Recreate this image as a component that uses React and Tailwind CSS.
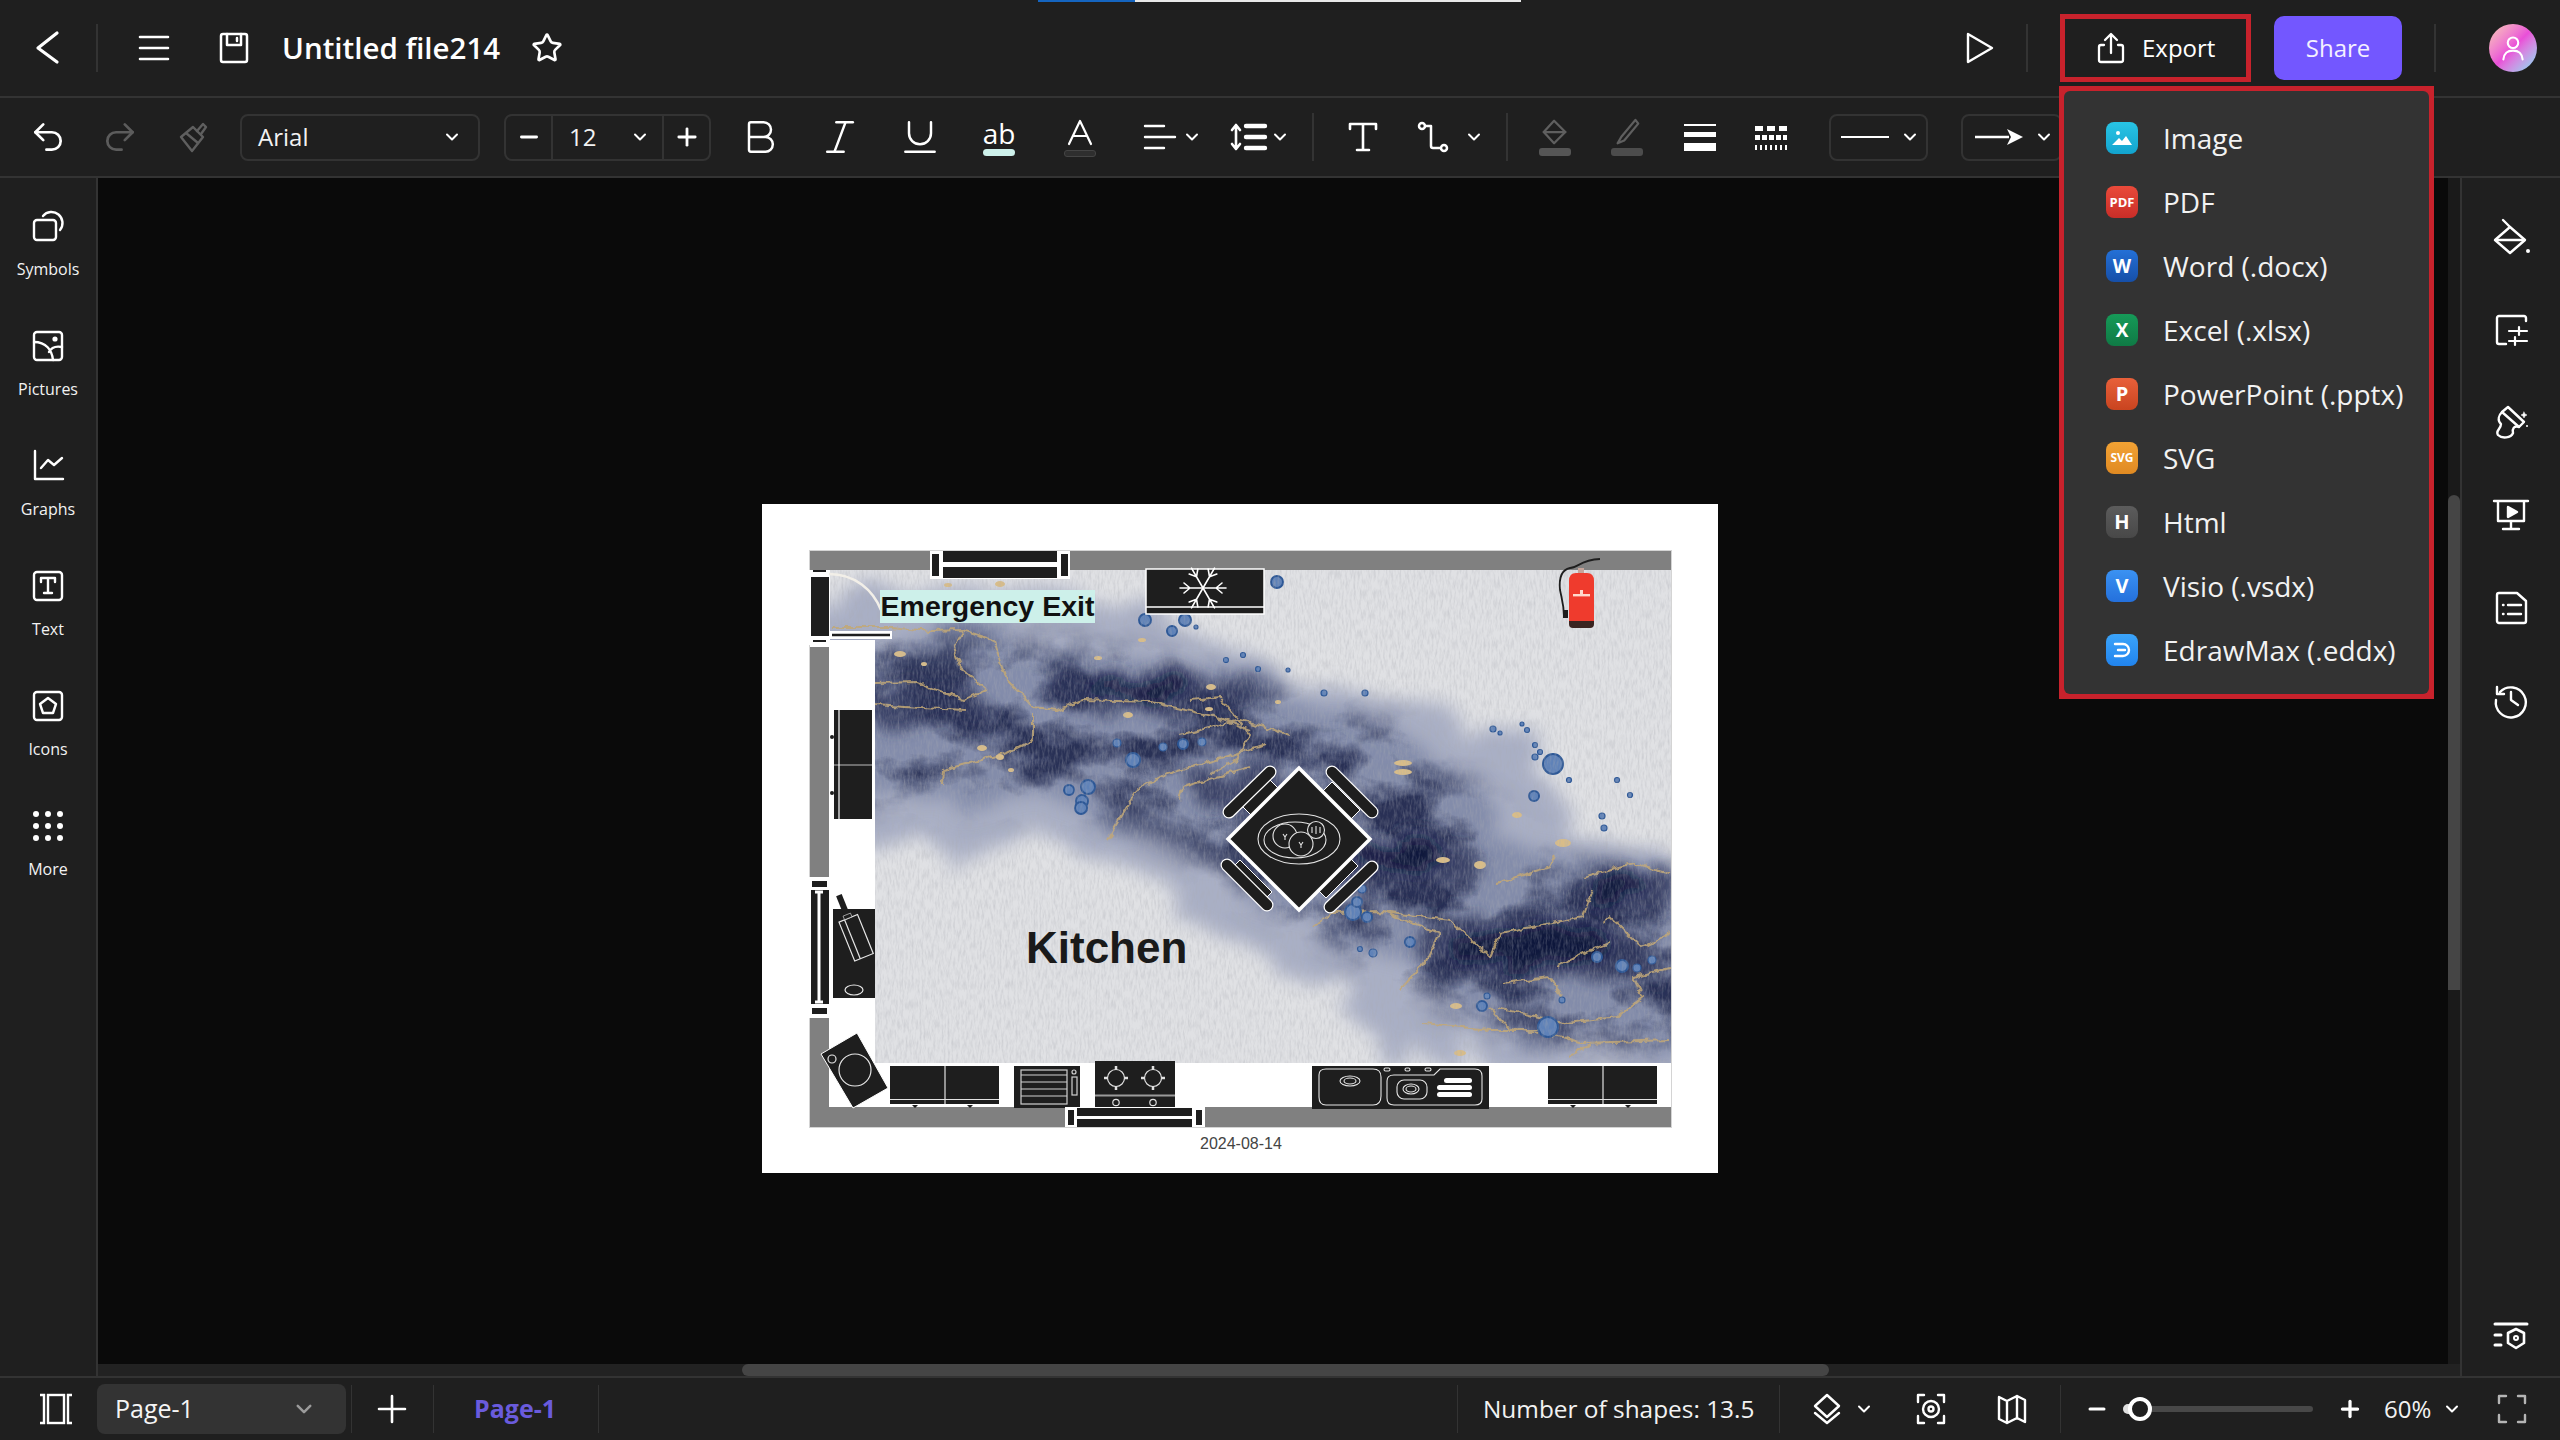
import React from "react";
import { Star, Bold, Italic, Underline, Undo2, Redo2, Plus, Minus } from "lucide-react";

const S = ({ size = 32, w = 2.4, children, color = "#fff", className = "" }) => (
  <svg width={size} height={size} viewBox="0 0 32 32" fill="none" stroke={color} strokeWidth={w} strokeLinecap="round" strokeLinejoin="round" className={"shrink-0 overflow-visible " + className}>
    {children}
  </svg>
);
const Chev = ({ className = "", color = "#fff", size = 16 }) => (
  <svg width={size} height={size} viewBox="0 0 16 16" fill="none" stroke={color} strokeWidth="2" strokeLinecap="round" strokeLinejoin="round" className={"shrink-0 " + className}>
    <path d="M3 5.5 8 10.5 13 5.5" />
  </svg>
);
const VDiv = ({ className = "" }) => <div className={"w-[2px] h-[48px] bg-[#333333] shrink-0 " + className} />;

const LeftItem = ({ label, children }) => (
  <div className="h-[120px] pt-[32px] flex flex-col items-center">
    {children}
    <span className="mt-[16px] text-[16px] leading-[22px] text-[#f2f2f2]">{label}</span>
  </div>
);

const MENU = [
  { l: "Image", c: "from-[#28c4e4] to-[#12a4cf]", g: "img" },
  { l: "PDF", c: "from-[#ea4a3a] to-[#c92d28]", g: "PDF", t: "text-[13px]" },
  { l: "Word (.docx)", c: "from-[#2470d6] to-[#164fa8]", g: "W", t: "text-[19px]" },
  { l: "Excel (.xlsx)", c: "from-[#169a58] to-[#0f7a45]", g: "X", t: "text-[19px]" },
  { l: "PowerPoint (.pptx)", c: "from-[#e8603a] to-[#c9441f]", g: "P", t: "text-[20px]" },
  { l: "SVG", c: "from-[#f2a234] to-[#e08a22]", g: "SVG", t: "text-[12px] text-[#ffe9c4]" },
  { l: "Html", c: "from-[#5c5c5c] to-[#484848]", g: "H", t: "text-[20px]" },
  { l: "Visio (.vsdx)", c: "from-[#3b92f2] to-[#2470dc]", g: "V", t: "text-[20px]" },
  { l: "EdrawMax (.eddx)", c: "from-[#3ba4fa] to-[#2184ee]", g: "edraw" },
];

function MenuGlyph({ g, t }) {
  if (g === "img")
    return (
      <svg width="24" height="20" viewBox="0 0 24 20" fill="#fff">
        <circle cx="8" cy="5" r="2" />
        <path d="M2 17 9 10 12 13 16 8 22 17Z" />
      </svg>
    );
  if (g === "edraw")
    return (
      <svg width="22" height="18" viewBox="0 0 22 18" fill="none" stroke="#fff" strokeWidth="2.4" strokeLinecap="round">
        <path d="M4 3H12A6 6 0 0 1 12 15H4M7 9H14" />
      </svg>
    );
  return <span className={"font-bold leading-none text-white " + t}>{g}</span>;
}

const VEINS = [
  "M830 627 L890 627 L930 631 L963 630 L953 647 L960 667 L987 690",
  "M963 630 L993 640 L1000 662 L1007 680 L1033 707 L1057 710 L1083 700 L1150 702 L1217 717 L1250 730",
  "M1033 713 L1033 740 L1007 753 L943 770 L942 783",
  "M875 683 L917 682 L963 700 L987 690",
  "M875 705 L920 708 L967 710",
  "M1250 767 L1183 787 L1180 800",
  "M1107 840 L1137 790 L1167 773 L1250 750 L1265 745",
  "M1190 700 L1220 697 L1250 735 L1236 760 L1210 775",
  "M1313 927 L1333 913 L1383 912 L1440 933 L1427 960 L1400 990",
  "M1383 912 L1450 920 L1490 957 L1500 933 L1583 917 L1593 890",
  "M1583 877 L1633 863 L1670 873",
  "M1603 923 L1610 917 L1643 947 L1670 933",
  "M1423 1023 L1490 1030 L1537 1030 L1583 1043 L1670 1040",
  "M1490 1008 L1507 1027 L1537 1033",
  "M1497 1008 L1567 1023 L1617 1017 L1643 997 L1633 977 L1670 968",
  "M1503 983 L1550 977 L1563 1000",
  "M1557 967 L1583 953 L1610 943",
  "M1497 883 L1550 867 L1555 857",
  "M1570 1055 L1590 1045",
  "M1180 735 L1240 720 L1290 735",
];
const DOTS = [
  [1145, 620, 6], [1185, 620, 6], [1172, 631, 5], [1196, 627, 2], [1133, 760, 7], [1088, 787, 7], [1069, 790, 5], [1082, 801, 6], [1081, 808, 6],
  [1117, 743, 4], [1183, 744, 5], [1163, 747, 4], [1202, 742, 4], [1277, 582, 6], [1324, 693, 3], [1365, 693, 3], [1553, 764, 10], [1534, 796, 5],
  [1602, 816, 3], [1604, 828, 3], [1569, 780, 2.5], [1527, 730, 2.5], [1493, 729, 3], [1500, 733, 2], [1535, 757, 3], [1353, 912, 8], [1367, 917, 5], [1357, 902, 5],
  [1362, 889, 4], [1548, 1027, 10], [1410, 942, 5], [1622, 966, 6], [1637, 968, 4], [1652, 960, 4], [1482, 1006, 5], [1562, 1000, 3], [1597, 957, 5],
  [1487, 996, 3], [1373, 953, 4], [1360, 949, 2.5], [1617, 780, 2.5], [1522, 724, 2], [1535, 745, 2.5], [1540, 752, 2.5], [1243, 655, 2.5], [1226, 660, 2.5], [1258, 669, 2.5], [1288, 670, 2], [1630, 795, 2.5],
];
const GOLD = [
  [1403, 763, 9, 3], [1403, 772, 9, 3], [1443, 860, 7, 3], [1480, 865, 6, 4], [1563, 843, 8, 4], [1517, 815, 5, 3], [900, 654, 6, 3], [924, 664, 3, 2], [948, 585, 4, 2],
  [1142, 640, 4, 2], [1098, 658, 4, 2], [1211, 687, 5, 3], [1128, 715, 5, 3], [982, 748, 5, 3], [1000, 757, 4, 3], [1011, 770, 3, 2], [1209, 709, 4, 2], [1456, 1006, 6, 3], [1460, 1053, 6, 3], [1278, 702, 3, 2], [1000, 584, 5, 3],
];
const BAND = "M800 640 C900 645 1000 635 1120 655 C1200 675 1300 700 1400 730 C1450 780 1500 810 1530 860 C1590 880 1640 870 1700 870 L1700 1050 C1560 1050 1480 1030 1420 985 C1340 950 1260 895 1180 845 C1100 790 950 800 800 795 Z";

function Plan() {
  return (
    <svg className="absolute inset-0" width="956" height="669" viewBox="762 504 956 669">
      <defs>
        <filter id="wc" x="-15%" y="-15%" width="130%" height="130%">
          <feTurbulence type="fractalNoise" baseFrequency="0.014 0.02" numOctaves="5" seed="7" result="n" />
          <feDisplacementMap in="SourceGraphic" in2="n" scale="80" xChannelSelector="R" yChannelSelector="G" />
          <feGaussianBlur stdDeviation="9" />
        </filter>
        <filter id="wc2" x="-30%" y="-30%" width="160%" height="160%">
          <feTurbulence type="fractalNoise" baseFrequency="0.025" numOctaves="4" seed="3" result="n" />
          <feDisplacementMap in="SourceGraphic" in2="n" scale="45" xChannelSelector="G" yChannelSelector="R" />
          <feGaussianBlur stdDeviation="7" />
        </filter>
        <filter id="cloud" x="-10%" y="-10%" width="120%" height="120%" colorInterpolationFilters="sRGB">
          <feGaussianBlur in="SourceGraphic" stdDeviation="18" result="b" />
          <feTurbulence type="fractalNoise" baseFrequency="0.011 0.017" numOctaves="6" seed="21" result="n" />
          <feColorMatrix in="n" type="matrix" values="0 0 0 0 0.1  0 0 0 0 0.13  0 0 0 0 0.28  4 0 0 0 -1.7" result="c" />
          <feComposite in="c" in2="b" operator="in" />
        </filter>
        <filter id="vein" x="-5%" y="-5%" width="110%" height="110%">
          <feTurbulence type="fractalNoise" baseFrequency="0.12" numOctaves="2" seed="5" result="n" />
          <feDisplacementMap in="SourceGraphic" in2="n" scale="7" xChannelSelector="R" yChannelSelector="G" />
        </filter>
        <filter id="paper" x="0" y="0" width="100%" height="100%">
          <feTurbulence type="fractalNoise" baseFrequency="0.5 0.1" numOctaves="3" seed="11" />
          <feColorMatrix type="matrix" values="0 0 0 0 0.4  0 0 0 0 0.41  0 0 0 0 0.45  0.7 0 0 0 -0.27" />
        </filter>
        <clipPath id="mc">
          <path d="M829 570H1671V1063H875V640H829Z" />
        </clipPath>
      </defs>

      <g clipPath="url(#mc)">
        <rect x="825" y="565" width="850" height="505" fill="#e0e1e4" />
        <path filter="url(#wc)" fill="#a9afc5" d="M800 580 C930 585 1000 590 1130 595 C1210 625 1230 650 1290 680 C1380 680 1480 720 1530 750 C1560 830 1620 850 1700 860 L1700 1080 L1500 1080 C1440 1050 1380 1040 1320 995 C1250 950 1200 905 1130 865 C1050 830 950 850 800 840 Z" />
        <path filter="url(#wc)" fill="#7d86a6" opacity="0.85" d={BAND} />
        <path filter="url(#cloud)" fill="#000" d={BAND} opacity="0.85" />
        <g filter="url(#wc2)" fill="#2a3358" opacity="0.8">
          <ellipse cx="1150" cy="692" rx="100" ry="22" />
          <ellipse cx="930" cy="706" rx="70" ry="22" />
          <ellipse cx="1240" cy="790" rx="50" ry="22" />
          <ellipse cx="1400" cy="862" rx="90" ry="26" />
          <ellipse cx="1520" cy="948" rx="110" ry="32" />
          <ellipse cx="1630" cy="892" rx="55" ry="22" />
          <ellipse cx="1620" cy="960" rx="40" ry="24" />
        </g>
        <g filter="url(#wc2)" fill="#10153a">
          <ellipse cx="1530" cy="946" rx="72" ry="18" />
          <ellipse cx="1400" cy="858" rx="52" ry="12" />
          <ellipse cx="1140" cy="690" rx="50" ry="10" />
          <ellipse cx="1620" cy="888" rx="30" ry="10" />
        </g>
        <g filter="url(#vein)" fill="none" stroke="#c4a873" strokeWidth="2" strokeLinejoin="round" opacity="0.85">
          {VEINS.map((d, i) => (
            <path key={i} d={d} />
          ))}
        </g>
        {GOLD.map(([x, y, rx, ry], i) => (
          <ellipse key={i} cx={x} cy={y} rx={rx} ry={ry} fill="#d9bd88" />
        ))}
        {DOTS.map(([x, y, r], i) => (
          <circle key={i} cx={x} cy={y} r={r} fill="#5f82b8" stroke="#2c5796" strokeWidth={r > 4 ? 2 : 1.2} />
        ))}
        <rect x="825" y="565" width="850" height="505" filter="url(#paper)" />
      </g>

      {/* walls */}
      <g fill="#808080">
        <rect x="810" y="551" width="861" height="19" />
        <rect x="810" y="647" width="19" height="230" />
        <rect x="810" y="1018" width="19" height="109" />
        <rect x="810" y="1107" width="255" height="20" />
        <rect x="1205" y="1107" width="466" height="20" />
      </g>
      <rect x="809.5" y="550.5" width="862" height="577" fill="none" stroke="#d4d4d4" strokeWidth="1" />
      <path d="M875 1063H1657Q1667 1063 1671 1071V1107H829V660Q829 640 845 640H860Q875 640 875 655Z" fill="#fff" />

      {/* top door-window */}
      <rect x="930" y="551" width="140" height="28" fill="#fff" />
      <g fill="#1e1e1e">
        <rect x="943" y="551" width="114" height="11" />
        <rect x="943" y="567" width="114" height="11" />
        <rect x="932" y="554" width="7" height="22" />
        <rect x="1061" y="554" width="7" height="22" />
      </g>
      <path d="M942 564.500H1058" stroke="#fff" strokeWidth="2.500" />
      {/* AC */}
      <rect x="1146" y="569" width="118" height="45" fill="#1e1e1e" stroke="#fff" strokeWidth="1.5" />
      <path d="M1146 607H1264" stroke="#fff" strokeWidth="1.5" />
      <g stroke="#fff" strokeWidth="1.6" strokeLinecap="round" fill="none">
        {[0, 60, 120, 180, 240, 300].map((a) => (
          <g key={a} transform={`rotate(${a} 1203 588)`}>
            <path d="M1203 588H1226M1216 588l6 -5M1216 588l6 5" />
          </g>
        ))}
      </g>
      {/* left top door */}
      <rect x="809" y="570" width="21" height="75" fill="#fff" />
      <rect x="811" y="577" width="18" height="59" fill="#1e1e1e" />
      <path d="M813 571H826M813 641H826" stroke="#1e1e1e" strokeWidth="2" />
      <path d="M829 574C855 574 873 590 881 610" stroke="#f2efe8" strokeWidth="2.5" fill="none" />
      <path d="M829 631H892V639H829Z" fill="#fff" />
      <path d="M832 635H890" stroke="#1e1e1e" strokeWidth="2.5" />
      {/* left cabinet */}
      <rect x="834" y="710" width="38" height="109" fill="#1e1e1e" />
      <path d="M834 765H872" stroke="#bbb" strokeWidth="1" />
      <path d="M839 710V819" stroke="#fff" strokeWidth="1.2" />
      <circle cx="832" cy="737" r="2" fill="#1e1e1e" />
      <circle cx="832" cy="793" r="2" fill="#1e1e1e" />
      {/* left window */}
      <rect x="809" y="877" width="21" height="141" fill="#fff" />
      <g fill="#1e1e1e">
        <rect x="811" y="890" width="18" height="114" />
        <rect x="812" y="881" width="15" height="6" />
        <rect x="812" y="1008" width="15" height="6" />
      </g>
      <path d="M819 893V1001" stroke="#fff" strokeWidth="3" />
      <path d="M815 892H823M815 1002H823" stroke="#fff" strokeWidth="3" />
      {/* counter w board */}
      <rect x="833" y="909" width="42" height="89" fill="#1e1e1e" />
      <g transform="rotate(-22 855 935)">
        <rect x="845" y="917" width="20" height="42" fill="none" stroke="#e6e6e6" strokeWidth="1.2" />
        <path d="M851 917V959" stroke="#e6e6e6" strokeWidth="1.2" />
        <rect x="852" y="892" width="6" height="22" fill="#1e1e1e" />
        <rect x="851" y="913" width="8" height="4" fill="#1e1e1e" stroke="#ddd" strokeWidth=".6" />
      </g>
      <ellipse cx="854" cy="990" rx="9" ry="5" fill="none" stroke="#e6e6e6" strokeWidth="1.2" />
      {/* washer */}
      <polygon points="857,1033 888,1088 853,1108 821,1054" fill="#1e1e1e" stroke="#fff" strokeWidth="1" />
      <circle cx="855" cy="1070" r="16" fill="none" stroke="#e6e6e6" strokeWidth="1.2" />
      <circle cx="832" cy="1059" r="4" fill="none" stroke="#e6e6e6" strokeWidth="1.2" />
      {/* bottom cabinets */}
      {[890, 1548].map((x) => (
        <g key={x}>
          <rect x={x} y="1066" width="109" height="38" fill="#1e1e1e" />
          <path d={`M${x + 55} 1066V1104M${x} 1099.5H${x + 109}`} stroke="#e2e2e2" strokeWidth="1.2" />
          <path d={`M${x + 22} 1105h6l-3 3zM${x + 77} 1105h6l-3 3z`} fill="#1e1e1e" />
        </g>
      ))}
      {/* oven */}
      <rect x="1014" y="1066" width="66" height="42" fill="#1e1e1e" />
      <g stroke="#d0d0d0" strokeWidth="1.2" fill="none">
        <rect x="1021" y="1070" width="46" height="34" />
        <path d="M1021 1075H1067M1021 1082H1067M1021 1089H1067M1021 1096H1067" />
        <rect x="1072" y="1077" width="5" height="18" />
        <circle cx="1074" cy="1072" r="2" />
      </g>
      {/* stove */}
      <rect x="1095" y="1061" width="80" height="47" fill="#1e1e1e" />
      <path d="M1095 1095.5H1175" stroke="#9a9a9a" strokeWidth="2" />
      <g stroke="#e0e0e0" strokeWidth="1.2" fill="none">
        {[1116, 1153].map((x) => (
          <g key={x}>
            <circle cx={x} cy="1078" r="8.5" />
            <path d={`M${x - 12} 1078H${x - 8}M${x + 8} 1078H${x + 12}M${x} 1066V1070M${x} 1086V1090`} strokeWidth="2.5" />
            <circle cx={x} cy="1102.5" r="3.2" />
          </g>
        ))}
      </g>
      {/* bottom door */}
      <rect x="1065" y="1107" width="140" height="20" fill="#fff" />
      <g fill="#1e1e1e">
        <rect x="1077" y="1108" width="115" height="8" />
        <rect x="1077" y="1119" width="115" height="8" />
        <rect x="1068" y="1110" width="6" height="15" />
        <rect x="1196" y="1110" width="6" height="15" />
      </g>
      {/* sink */}
      <rect x="1312" y="1066" width="177" height="43" fill="#1e1e1e" />
      <g stroke="#e6e6e6" strokeWidth="1.1" fill="none">
        <path d="M1319 1075Q1319 1069 1326 1069H1373Q1381 1069 1381 1077V1096Q1381 1105 1373 1105H1326Q1319 1105 1319 1097Z" />
        <path d="M1387 1081Q1387 1075 1394 1075H1434L1440 1069H1475Q1482 1069 1482 1076V1099Q1482 1105 1475 1105H1394Q1387 1105 1387 1098Z" />
        <rect x="1397" y="1080" width="30" height="19" rx="7" />
        <ellipse cx="1350" cy="1081" rx="10" ry="5" />
        <ellipse cx="1350" cy="1081" rx="6" ry="3" />
        <ellipse cx="1411" cy="1089" rx="8" ry="5" />
        <ellipse cx="1411" cy="1089" rx="5" ry="3" />
        <rect x="1384" y="1068" width="6" height="3" rx="1.5" />
        <rect x="1405" y="1068" width="5" height="3" rx="1.5" />
        <rect x="1425" y="1068" width="6" height="3" rx="1.5" />
      </g>
      <g fill="#fff">
        <rect x="1444" y="1078" width="28" height="5" rx="2.5" />
        <rect x="1437" y="1085" width="35" height="5" rx="2.5" />
        <rect x="1437" y="1092" width="35" height="5" rx="2.5" />
      </g>
      {/* table */}
      {[
        ["M1229 812L1270 772", "M1241 805L1268 778L1280 790L1253 817Z"],
        ["M1332 772L1372 812", "M1332 782L1360 810L1348 822L1320 794Z"],
        ["M1227 865L1267 905", "M1240 860L1272 892L1260 904L1228 872Z"],
        ["M1330 907L1372 867", "M1358 866L1326 898L1314 886L1346 854Z"],
      ].map(([bar, seat], i) => (
        <g key={i}>
          <path d={seat} fill="#1e1e1e" stroke="#fff" strokeWidth="1" />
          <path d={bar} stroke="#fff" strokeWidth="13" strokeLinecap="round" />
          <path d={bar} stroke="#1e1e1e" strokeWidth="10.5" strokeLinecap="round" />
        </g>
      ))}
      <polygon points="1299,768 1370,839 1299,910 1228,839" fill="#1e1e1e" stroke="#fff" strokeWidth="3.5" />
      <g stroke="#e4e4e4" strokeWidth="1.1" fill="#1e1e1e">
        <ellipse cx="1299" cy="839" rx="41" ry="25" fill="none" />
        <ellipse cx="1295" cy="840" rx="31" ry="18" fill="none" />
        <circle cx="1316" cy="830" r="8.5" />
        <circle cx="1285" cy="836" r="12" />
        <circle cx="1301" cy="844" r="12" />
        <path d="M1283 834l2 3 2 -3M1285 837v3M1299 842l2 3 2 -3M1301 845v3M1312 827v6M1316 826v8M1320 827v6" fill="none" />
      </g>
      {/* extinguisher */}
      <path d="M1600 559C1580 560 1578 568 1570 568C1560 570 1559 580 1560 590C1562 600 1564 605 1564 617" stroke="#1e1e1e" strokeWidth="1.8" fill="none" />
      <rect x="1563" y="610" width="5" height="8" fill="#1e1e1e" />
      <rect x="1578" y="568" width="6" height="6" fill="#c6a49a" />
      <path d="M1569 581Q1569 573 1576 573H1587Q1594 573 1594 581V622H1569Z" fill="#ef3b2d" />
      <path d="M1569 621H1594V624Q1594 628 1590 628H1573Q1569 628 1569 624Z" fill="#3a2420" />
      <rect x="1573" y="594" width="17" height="2.4" fill="#ffd9cc" />
      <rect x="1580" y="590" width="3" height="4" fill="#ffd9cc" />
    </svg>
  );
}

export default function App() {
  return (
    <div className="relative w-[2560px] h-[1440px] overflow-hidden bg-[#1f1f1f] text-white flex flex-col font-['Open_Sans','Noto_Sans',sans-serif]">
      {/* load bar */}
      <div className="absolute top-0 left-[1038px] flex h-[2px]">
        <div className="w-[97px] bg-[#1565c0]" />
        <div className="w-[386px] bg-[#e8e8e8]" />
      </div>

      {/* title bar */}
      <div className="h-[98px] shrink-0 border-b-2 border-[#333333] flex items-center pl-[32px] pr-[23px]">
        <S w={3.2}><path d="M25 1 6 16 25 30" /></S>
        <VDiv className="ml-[32px]" />
        <S className="ml-[40px]" w={2.6}><path d="M2 5H30M2 16H30M2 27H30" /></S>
        <S className="ml-[48px]" w={2.5}><path d="M5 2H27A2 2 0 0 1 29 4V28A2 2 0 0 1 27 30H5A2 2 0 0 1 3 28V4A2 2 0 0 1 5 2Z" /><path d="M9 2V13H23V2" /><path d="M19 6V9" /></S>
        <span className="ml-[32px] w-[217px] text-[29.5px] leading-[40px] font-semibold whitespace-nowrap">Untitled file214</span>
        <Star className="ml-[32px] shrink-0" size={32} strokeWidth={2} color="#fff" />
        <div className="flex-1" />
        <S w={2.4}><path d="M5 2 29 16 5 30Z" /></S>
        <VDiv className="ml-[31px]" />
        <div className="ml-[32px] w-[191px] h-[68px] border-[5px] border-[#c8222c] flex items-center pl-[30px] shrink-0">
          <S w={2.3}><path d="M9 13H6A2 2 0 0 0 4 15V28A2 2 0 0 0 6 30H26A2 2 0 0 0 28 28V15A2 2 0 0 0 26 13H23" /><path d="M16 21V3M10 8 16 2 22 8" /></S>
          <span className="ml-[15px] text-[24px] leading-[32px]">Export</span>
        </div>
        <div className="ml-[23px] w-[128px] h-[64px] rounded-[10px] bg-[#7357ff] flex items-center justify-center text-[24px] text-[#f4f0ff] shrink-0">Share</div>
        <VDiv className="ml-[32px]" />
        <div className="ml-[53px] w-[48px] h-[48px] rounded-full bg-linear-to-br from-[#f8c9b0] via-[#e94fd8] to-[#58e2f6] flex items-center justify-center shrink-0">
          <S size={28} w={2.4}><circle cx="16" cy="10" r="6" /><path d="M5 29C6 21 10 19 16 19C22 19 26 21 27 29" /></S>
        </div>
      </div>

      {/* toolbar */}
      <div className="h-[80px] shrink-0 border-b-2 border-[#333333] flex items-center pl-[29px]">
        <Undo2 size={38} strokeWidth={1.7} color="#fff" className="shrink-0" />
        <Redo2 size={38} strokeWidth={1.7} color="#5c5c5c" className="ml-[34px] shrink-0" />
        <S className="ml-[38px]" color="#5f5f5f" w={2.4}><path d="M4 16 16 6 26 16 15 30Z" /><path d="M9 12 21 22M20 10 26 3 29 6 24 13" /></S>
        <div className="ml-[31px] w-[240px] h-[47px] rounded-[8px] border-2 border-[#333333] flex items-center pl-[16px] pr-[18px] justify-between shrink-0">
          <span className="text-[24px] text-[#f2f2f2]">Arial</span>
          <Chev />
        </div>
        <div className="ml-[24px] w-[207px] h-[47px] rounded-[8px] border-2 border-[#333333] flex items-center shrink-0">
          <div className="w-[45px] h-full flex items-center justify-center"><Minus size={26} strokeWidth={2.6} color="#fff" /></div>
          <div className="w-[113px] h-full border-x-2 border-[#333333] flex items-center justify-between pl-[16px] pr-[14px]">
            <span className="text-[24px] text-[#f2f2f2]">12</span>
            <Chev />
          </div>
          <div className="flex-1 h-full flex items-center justify-center"><Plus size={28} strokeWidth={2.4} color="#fff" /></div>
        </div>
        <Bold size={44} strokeWidth={1.35} color="#fff" className="ml-[27px] shrink-0" />
        <Italic size={44} strokeWidth={1.35} color="#fff" className="ml-[36px] shrink-0" />
        <Underline size={44} strokeWidth={1.35} color="#fff" className="ml-[36px] shrink-0" />
        <div className="ml-[41px] w-[32px] flex flex-col items-center shrink-0">
          <span className="text-[28px] leading-[28px] text-white">ab</span>
          <div className="w-[32px] h-[7px] rounded-full bg-[#cdf0ea] mt-[2px]" />
        </div>
        <div className="ml-[49px] w-[32px] flex flex-col items-center shrink-0">
          <S size={32} w={2.2}><path d="M5 26 16 3 27 26M9 18H23" /></S>
          <div className="w-[32px] h-[7px] rounded-[3px] bg-[#2e2e2e] border border-[#444]" />
        </div>
        <S className="ml-[48px]" w={2.4}><path d="M1 5H20M1 16H31M1 27H20" /></S>
        <Chev className="ml-[8px]" />
        <S className="ml-[32px]" w={3}><path d="M4 4V28M0 9 4 4 8 9M0 23 4 28 8 23" strokeWidth="2.6" /><path d="M14 5H33M14 16H33M14 27H33" strokeWidth="4.4" /></S>
        <Chev className="ml-[8px]" />
        <VDiv className="ml-[24px]" />
        <S className="ml-[33px]" w={2.6}><path d="M3 8V3H29V8M16 3V29M10 29H22" /></S>
        <S className="ml-[38px]" w={2.5}><circle cx="5" cy="5" r="3" /><path d="M8 5H14V25Q14 27 16 27H23" /><circle cx="27" cy="27" r="3" /></S>
        <Chev className="ml-[17px]" />
        <VDiv className="ml-[24px]" />
        <div className="ml-[31px] w-[32px] flex flex-col items-center shrink-0">
          <S size={30} color="#5f5f5f" w={2.4}><path d="M4 15 15 3 27 15 15 27Z" /><path d="M4 15H27" /></S>
          <div className="w-[32px] h-[8px] rounded-[3px] bg-[#555555]" />
        </div>
        <div className="ml-[40px] w-[32px] flex flex-col items-center shrink-0">
          <S size={30} color="#5f5f5f" w={2.4}><path d="M25 2 10 20 6 27 13 24 28 6Z" /></S>
          <div className="w-[32px] h-[8px] rounded-[3px] bg-[#4c4c4c]" />
        </div>
        <div className="ml-[41px] w-[32px] flex flex-col gap-[6px] shrink-0">
          <div className="h-[2px] bg-white" />
          <div className="h-[5px] bg-white" />
          <div className="h-[8px] bg-white" />
        </div>
        <div className="ml-[39px] shrink-0">
          <svg width="32" height="32" viewBox="0 0 32 32" fill="#fff">
            <path d="M0 5H8V10H0ZM12 5H20V10H12ZM24 5H32V10H24Z" />
            <path d="M0 14H5V19H0ZM7 14H12V19H7ZM14 14H19V19H14ZM21 14H26V19H21ZM28 14H32V19H28Z" />
            <path d="M0 24H2V29H0ZM5 24H7V29H5ZM10 24H12V29H10ZM15 24H17V29H15ZM20 24H22V29H20ZM25 24H27V29H25ZM30 24H32V29H30Z" />
          </svg>
        </div>
        <div className="ml-[42px] w-[99px] h-[47px] rounded-[8px] border-2 border-[#333333] flex items-center pl-[10px] pr-[8px] justify-between shrink-0">
          <div className="w-[48px] h-[2px] bg-white" />
          <Chev />
        </div>
        <div className="ml-[33px] w-[101px] h-[47px] rounded-[8px] border-2 border-[#333333] flex items-center pl-[12px] pr-[8px] justify-between shrink-0">
          <svg width="48" height="20" viewBox="0 0 48 20"><path d="M0 10H34" stroke="#fff" strokeWidth="2.5" /><path d="M32 2 48 10 32 18 36 10Z" fill="#fff" /></svg>
          <Chev />
        </div>
      </div>

      {/* middle */}
      <div className="flex-1 min-h-0 flex">
        <div className="w-[98px] shrink-0 border-r-2 border-[#333333]">
          <LeftItem label="Symbols"><S w={2.4}><rect x="2" y="10" width="22" height="20" rx="3" /><path d="M11 6A10 10 0 1 1 28 20" /></S></LeftItem>
          <LeftItem label="Pictures"><S w={2.4}><rect x="2" y="2" width="28" height="28" rx="3" /><path d="M2 12C14 12 20 20 21 30M17 22C20 16 25 16 30 17" /><circle cx="23" cy="9" r="1.4" fill="#fff" /></S></LeftItem>
          <LeftItem label="Graphs"><S w={2.4}><path d="M3 1V29H31" /><path d="M9 18 16 10 22 15 30 8" /></S></LeftItem>
          <LeftItem label="Text"><S w={2.4}><rect x="2" y="2" width="28" height="28" rx="3" /><path d="M9 12V8H23V12M16 8V23M12 23H20" /></S></LeftItem>
          <LeftItem label="Icons"><S w={2.4}><rect x="2" y="2" width="28" height="28" rx="3" /><path d="M16 8 24 14 21 23H11L8 14Z" /></S></LeftItem>
          <LeftItem label="More">
            <svg width="32" height="32" viewBox="0 0 32 32" fill="#fff">
              {[4, 16, 28].flatMap((y) => [4, 16, 28].map((x) => <circle key={x + "-" + y} cx={x} cy={y} r="3" />))}
            </svg>
          </LeftItem>
        </div>

        <div className="flex-1 min-w-0 flex flex-col">
          <div className="flex-1 min-h-0 flex">
            <div className="flex-1 min-w-0 bg-[#0a0a0a] pl-[664px] pt-[326px]">
              <div className="relative w-[956px] h-[669px] bg-white">
                <Plan />
                <div className="absolute left-[118px] top-[86px] w-[215px] h-[33px] bg-[#cdf0ea] flex items-center justify-center font-['Liberation_Sans',Arial,sans-serif] font-bold text-[28.5px] leading-none text-[#111] whitespace-nowrap">Emergency Exit</div>
                <div className="absolute left-[264px] top-[417px] font-['Liberation_Sans',Arial,sans-serif] font-bold text-[44px] leading-[54px] text-[#1a1a1a]">Kitchen</div>
                <div className="absolute left-[438px] top-[631px] font-['Liberation_Sans',Arial,sans-serif] text-[16px] leading-[18px] text-[#444]">2024-08-14</div>
              </div>
            </div>
            <div className="w-[12px] shrink-0 bg-[#1a1a1a] pt-[317px]">
              <div className="h-[495px] rounded-t-[6px] bg-[#454545]" />
            </div>
          </div>
          <div className="h-[12px] shrink-0 bg-[#222222] pl-[644px]">
            <div className="w-[1087px] h-full rounded-[6px] bg-[#454545]" />
          </div>
        </div>

        <div className="w-[100px] shrink-0 border-l-2 border-[#333333] flex flex-col items-center pt-[44px] gap-[60.4px]">
          <S w={2.4}><path d="M0 18 15 5 30 18 15 31Z" /><path d="M8 -2 15 5M2 18H28" /><circle cx="33" cy="29" r="2" fill="#fff" stroke="none" /></S>
          <S w={2.4}><path d="M31 7V4A2 2 0 0 0 29 2H4A2 2 0 0 0 2 4V28A2 2 0 0 0 4 30H11" /><path d="M14 17H32M14 27H32M24 13V21M20 23V31" strokeWidth="2.2" /></S>
          <S w={2.4}><path d="M13 0 29 15 24 20C19 18 17 22 18 26C16 31 7 32 3 28C0 24 6 22 6 17C2 13 4 8 7 5Z" /><path d="M7 5 24 20" /><path d="M29 5l1 2 2 1 -2 1 -1 2 -1 -2 -2 -1 2 -1z" fill="#fff" strokeWidth="0.5" /><circle cx="32" cy="19" r="1" fill="#fff" stroke="none" /></S>
          <S w={2.4}><path d="M-1 2H33M3 2V22H29V2M16 22V30M8 30H24" /><path d="M13 8 22 13 13 18Z" fill="#fff" /></S>
          <S w={2.4}><path d="M4 1H22L31 9V29A2 2 0 0 1 29 31H4A2 2 0 0 1 2 29V3A2 2 0 0 1 4 1Z" /><path d="M13 13H26M13 22H26M8 13H8.5M8 22H8.5" /></S>
          <S w={2.4}><path d="M5 8A15 15 0 1 1 1 16M2 3V10H9M16 8V16L23 21" /></S>
          <S className="mt-auto mb-[25px]" w={3}><path d="M0 5H32M0 16H6M0 26H6" /><path d="M21 10 29 14V24L21 29 13 24V14Z" strokeWidth="2.6" /><circle cx="21" cy="19" r="2" strokeWidth="2" /></S>
        </div>
      </div>

      {/* status bar */}
      <div className="h-[64px] shrink-0 border-t-2 border-[#333333] flex items-center pl-[38px] text-[25px]">
        <svg width="36" height="32" viewBox="0 0 36 32" fill="none" stroke="#fff" strokeWidth="2.4" className="shrink-0">
          <rect x="10" y="2" width="16" height="28" />
          <path d="M2 2H6V30H2M34 2H30V30H34" />
        </svg>
        <div className="ml-[23px] w-[249px] h-[50px] rounded-[8px] bg-[#333333] flex items-center justify-between pl-[18px] pr-[32px] shrink-0">
          <span className="text-[#f5f5f5] whitespace-nowrap">Page-1</span>
          <Chev color="#9b9b9b" size={20} />
        </div>
        <VDiv className="ml-[5px] !w-[1px]" />
        <S className="ml-[24px]" w={2.6}><path d="M16 3V29M3 16H29" /></S>
        <VDiv className="ml-[25px] !w-[1px]" />
        <span className="ml-[40px] w-[82px] font-bold text-[#6a5bdc] whitespace-nowrap shrink-0">Page-1</span>
        <VDiv className="ml-[42px] !w-[1px]" />
        <div className="flex-1" />
        <VDiv className="!w-[1px]" />
        <span className="ml-[25px] w-[271px] text-[24.4px] text-[#f2f2f2] whitespace-nowrap shrink-0">Number of shapes: 13.5</span>
        <VDiv className="ml-[25px] !w-[1px]" />
        <S className="ml-[31px]" w={2.4}><path d="M16 2 28 13 16 24 4 13Z" /><path d="M4 20 16 30 28 20" /></S>
        <Chev className="ml-[13px]" />
        <S className="ml-[43px]" w={2.4}><path d="M9 2H3V9M23 2H29V9M9 30H3V23M23 30H29V23" /><circle cx="16" cy="16" r="8" /><circle cx="16" cy="16" r="2.5" /></S>
        <S className="ml-[49px]" w={2.4}><path d="M3 4 11 8 21 3 29 7V29L21 25 11 30 3 26ZM11 8V30M21 3V25" /></S>
        <VDiv className="ml-[32px] !w-[1px]" />
        <Minus size={24} strokeWidth={3} color="#fff" className="ml-[24px] shrink-0" />
        <div className="relative ml-[14px] w-[190px] h-[6px] rounded-full bg-[#484848] shrink-0">
          <div className="absolute left-0 top-[-2px] w-[8px] h-[10px] bg-[#e0e0e0] rounded-l-full" />
          <div className="absolute left-[5px] top-[-9px] w-[24px] h-[24px] rounded-full border-[4px] border-white bg-[#1f1f1f]" />
        </div>
        <Plus size={26} strokeWidth={3} color="#fff" className="ml-[24px] shrink-0" />
        <span className="ml-[21px] w-[48px] text-[24px] text-[#f2f2f2] whitespace-nowrap shrink-0">60%</span>
        <Chev className="ml-[12px]" />
        <S className="ml-[36px]" color="#b5b5b5" w={2.4}><path d="M10 3H3V10M22 3H29V10M10 29H3V22M22 29H29V22" /></S>
        <div className="w-[32px] shrink-0" />
      </div>

      {/* export menu */}
      <div className="absolute left-[2059px] top-[86px] w-[375px] h-[613px] border-[5px] border-[#c8222c] bg-[#c8222c]">
        <div className="h-full rounded-[6px] bg-[#333333] pt-[15px]">
          {MENU.map((m) => (
            <div key={m.l} className="h-[64px] flex items-center pl-[42px]">
              <div className={"w-[32px] h-[32px] rounded-[8px] bg-linear-to-b flex items-center justify-center shrink-0 " + m.c}>
                <MenuGlyph g={m.g} t={m.t} />
              </div>
              <span className="ml-[25px] text-[28px] leading-[40px] text-[#f2f2f2] whitespace-nowrap">{m.l}</span>
            </div>
          ))}
        </div>
      </div>
    </div>
  );
}
